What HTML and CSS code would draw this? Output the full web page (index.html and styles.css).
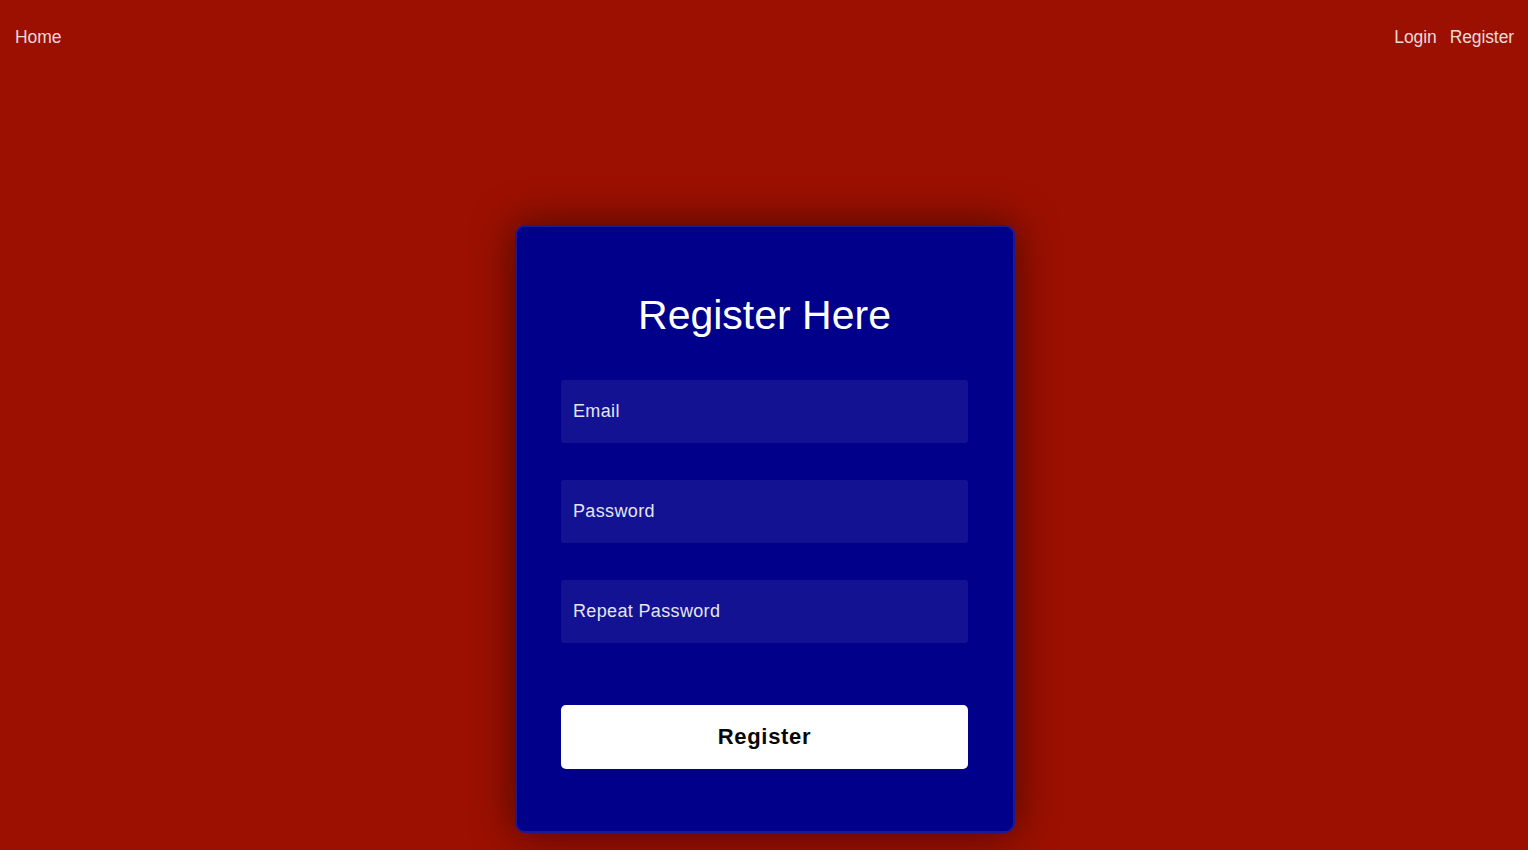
FILE: index.html
```html
<!DOCTYPE html>
<html lang="en">
<head>
<meta charset="utf-8">
<title>Register</title>
<link rel="stylesheet" href="styles.css">
</head>
<body>
<nav class="nav">
  <a class="nav-link" href="#">Home</a>
  <div class="nav-right">
    <a class="nav-link" href="#">Login</a>
    <a class="nav-link" href="#">Register</a>
  </div>
</nav>
<main class="main">
  <form class="card">
    <h1 class="title">Register Here</h1>
    <input class="field" type="email" placeholder="Email">
    <input class="field" type="password" placeholder="Password">
    <input class="field" type="password" placeholder="Repeat Password">
    <button class="btn" type="button">Register</button>
  </form>
</main>
</body>
</html>
```
FILE: styles.css
```css
* { box-sizing: border-box; }
html, body { margin: 0; padding: 0; }
body {
  background: #9b1000;
  font-family: "Liberation Sans", Arial, sans-serif;
  height: 850px;
  overflow: hidden;
}
.nav {
  display: flex;
  justify-content: space-between;
  align-items: flex-start;
  padding: 27px 14px 0 15px;
  height: 74px;
}
.nav-right { display: flex; gap: 13px; }
.nav-link {
  color: #e9dada;
  text-decoration: none;
  font-size: 17.5px;
  line-height: 20px;
  letter-spacing: -0.1px;
}
.main {
  display: flex;
  justify-content: center;
  padding-top: 151px;
  padding-left: 2px;
}
.card {
  width: 500px;
  background: #00008b;
  border: 2px solid rgba(255,255,255,0.1);
  border-radius: 10px;
  box-shadow: 0 0 40px rgba(0,0,0,0.55);
  padding: 65px 45px 62px 44px;
  display: flex;
  flex-direction: column;
}
.title {
  margin: -1px 0 42px;
  padding-top: 1px;
  color: #fff;
  font-weight: 400;
  font-size: 41px;
  line-height: 46px;
  text-align: center;
}
.field {
  display: block;
  width: 100%;
  height: 63px;
  margin: 0 0 37px;
  border: none;
  outline: none;
  border-radius: 3px;
  background: rgba(255,255,255,0.07);
  padding: 0 12px;
  font-family: "Liberation Sans", Arial, sans-serif;
  font-size: 18px;
  letter-spacing: 0.35px;
  color: #e5e5e5;
}
.field::placeholder { color: #e5e5ee; opacity: 1; }
.field:last-of-type { margin-bottom: 62px; }
.btn {
  width: 100%;
  height: 64px;
  border: none;
  border-radius: 5px;
  background: #fff;
  color: #080808;
  font-family: "Liberation Sans", Arial, sans-serif;
  font-weight: 700;
  font-size: 22px;
  letter-spacing: 0.7px;
  cursor: pointer;
}
```
